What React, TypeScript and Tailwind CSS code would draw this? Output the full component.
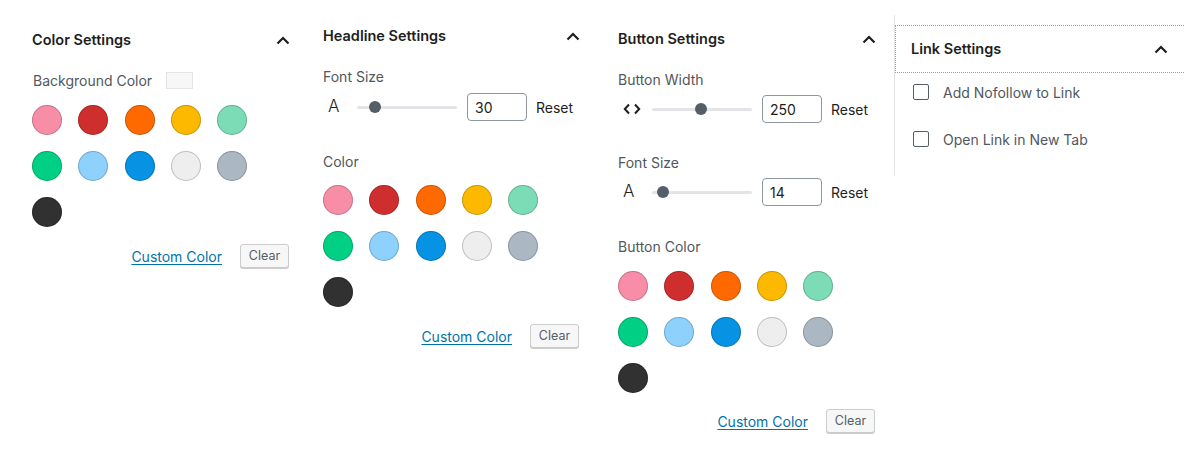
import React from "react";

const COLORS = [
  "#f78da7",
  "#cf2e2e",
  "#ff6900",
  "#fcb900",
  "#7bdcb5",
  "#00d084",
  "#8ed1fc",
  "#0693e3",
  "#eeeeee",
  "#abb8c3",
  "#313131",
];

function ChevronUp() {
  return (
    <svg width="14" height="9" viewBox="0 0 14 9" fill="none">
      <path d="M1.5 7.5L7 2L12.5 7.5" stroke="#1e1e1e" strokeWidth="2.2" />
    </svg>
  );
}

function Header({ title }: { title: string }) {
  return (
    <div className="flex h-5 items-center justify-between">
      <span className="text-[14.5px] font-semibold text-[#1e1e1e]">{title}</span>
      <span className="mr-[-1px] flex items-center">
        <ChevronUp />
      </span>
    </div>
  );
}

function Palette() {
  return (
    <div className="grid grid-cols-[repeat(5,30px)] gap-x-[16.25px] gap-y-[16px]">
      {COLORS.map((c) => (
        <span
          key={c}
          className="block h-[30px] w-[30px] rounded-full shadow-[inset_0_0_0_1px_rgba(0,0,0,0.2)]"
          style={{ backgroundColor: c }}
        />
      ))}
    </div>
  );
}

function ClearRow() {
  return (
    <div className="flex items-center justify-end gap-[18px]">
      <span className="text-[14px] text-[#0073aa] underline underline-offset-2">Custom Color</span>
      <button className="h-6 w-[49px] rounded-[3px] border border-[#cccccc] bg-[#f7f7f7] text-[12.5px] text-[#555d66] shadow-[0_1px_0_#cccccc]">
        Clear
      </button>
    </div>
  );
}

function Slider({ pct }: { pct: number }) {
  return (
    <div className="relative h-3 w-[100px]">
      <div className="absolute left-0 right-0 top-[5px] h-[3px] rounded bg-[#e2e4e7]" />
      <div
        className="absolute top-0 h-3 w-3 rounded-full bg-[#555d66]"
        style={{ left: `calc(${pct}% - 6px)` }}
      />
    </div>
  );
}

function RangeRow({ icon, pct, value }: { icon: React.ReactNode; pct: number; value: string }) {
  return (
    <div className="flex h-7 items-center">
      <span className="flex w-[34px] items-center pl-[5px] text-[17px] font-light text-[#1e1e1e]">{icon}</span>
      <Slider pct={pct} />
      <div className="ml-[10px] flex h-7 w-[60px] items-center rounded-[4px] border border-[#8d96a0] pl-[7px] text-[14px] text-[#1e1e1e]">
        {value}
      </div>
      <span className="ml-[9px] text-[14px] text-[#1e1e1e]">Reset</span>
    </div>
  );
}

function Label({ children }: { children: React.ReactNode }) {
  return <div className="flex h-5 items-center text-[14px] text-[#50575e]">{children}</div>;
}

function WidthIcon() {
  return (
    <svg width="18" height="12" viewBox="0 0 18 12" fill="none">
      <path d="M6 1.5L1.8 6L6 10.5" stroke="#1e1e1e" strokeWidth="2" />
      <path d="M12 1.5L16.2 6L12 10.5" stroke="#1e1e1e" strokeWidth="2" />
    </svg>
  );
}

function Checkbox({ label }: { label: string }) {
  return (
    <div className="flex h-5 items-center">
      <span className="block h-4 w-4 rounded-[2px] border-[1.5px] border-[#555d66]" />
      <span className="ml-[14px] text-[14px] text-[#50575e]">{label}</span>
    </div>
  );
}

export default function App() {
  return (
    <div
      className="flex h-[466px] w-[1184px] items-start bg-white"
      style={{ fontFamily: "Inter, 'Noto Sans', sans-serif" }}
    >
      {/* Column 1 */}
      <div className="flex w-[300px] flex-col pl-[32px] pr-[11px] pt-[30px]">
        <Header title="Color Settings" />
        <div className="mt-[20px] flex items-center">
          <Label>
            <span className="pl-[1px]">Background Color</span>
          </Label>
          <span className="ml-[14px] block h-[17px] w-[27px] border border-[#e2e4e7] bg-[#f7f7f7]" />
        </div>
        <div className="mt-[15px]">
          <Palette />
        </div>
        <div className="mt-[17px]">
          <ClearRow />
        </div>
      </div>

      {/* Column 2 */}
      <div className="flex w-[295px] flex-col pl-[23px] pr-[16px] pt-[26px]">
        <Header title="Headline Settings" />
        <div className="mt-5">
          <Label>Font Size</Label>
        </div>
        <div className="mt-[7px]">
          <RangeRow icon={<span>A</span>} pct={18} value="30" />
        </div>
        <div className="mt-[30px]">
          <Label>Color</Label>
        </div>
        <div className="mt-[14px]">
          <Palette />
        </div>
        <div className="mt-[17px]">
          <ClearRow />
        </div>
      </div>

      {/* Column 3 */}
      <div className="flex w-[299px] flex-col pl-[23px] pr-[19px] pt-[29px]">
        <Header title="Button Settings" />
        <div className="mt-5">
          <Label>Button Width</Label>
        </div>
        <div className="mt-[6px]">
          <RangeRow icon={<WidthIcon />} pct={49} value="250" />
        </div>
        <div className="mt-[29px]">
          <Label>Font Size</Label>
        </div>
        <div className="mt-[6px]">
          <RangeRow icon={<span>A</span>} pct={11} value="14" />
        </div>
        <div className="mt-[30px]">
          <Label>Button Color</Label>
        </div>
        <div className="mt-[15px]">
          <Palette />
        </div>
        <div className="mt-[16px]">
          <ClearRow />
        </div>
      </div>

      {/* Column 4 */}
      <div className="mt-[15px] flex h-[160px] w-[290px] flex-col border-l border-[#e2e4e7]">
        <div className="mt-[10px] flex h-[48px] items-center justify-between border-y border-l border-dotted border-[#9aa0a6] pl-[15px] pr-[16px]">
          <span className="text-[14.5px] font-semibold text-[#1e1e1e]">Link Settings</span>
          <ChevronUp />
        </div>
        <div className="mt-[9px] flex flex-col gap-[27px] pl-[18px]">
          <Checkbox label="Add Nofollow to Link" />
          <Checkbox label="Open Link in New Tab" />
        </div>
      </div>
    </div>
  );
}
